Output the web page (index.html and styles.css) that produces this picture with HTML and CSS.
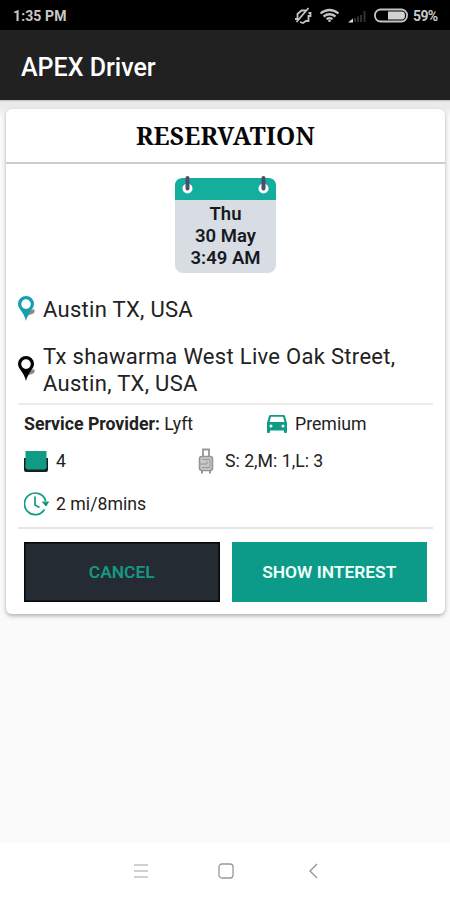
FILE: index.html
```html
<!DOCTYPE html>
<html lang="en">
<head>
<meta charset="utf-8">
<title>APEX Driver</title>
<link rel="stylesheet" href="styles.css">
</head>
<body>
<div class="status">
  <span class="time">1:35 PM</span>
  <svg class="status-icons" width="116" height="20" viewBox="0 0 116 20" fill="none" stroke="#c4c4c4">
    <path d="M4.500 13V9l4-3.500h5M2 14h3.500M7 17l3 1 3-2h2.500v-5h2V8h-2M3.500 17L15.500 3" stroke-width="1.800"/>
    <path d="M27.500 8.500q9-7 18 0M30.500 11.500q6-4.500 12 0M33.500 14.200q3-2 6 0" stroke-width="2.200"/>
    <circle cx="36.500" cy="15.700" r="1.300" fill="#c4c4c4" stroke="none"/>
    <path d="M55 17.500l5-4v4z" fill="#ddd" stroke="none"/>
    <path d="M62 17v-4M65 17v-5.500M68 17v-7M71.500 17V6" stroke="#303030" stroke-width="2"/>
    <rect x="82" y="4.500" width="32" height="12" rx="5.500" stroke-width="1.800"/>
    <path d="M95 6.500h14q3 0 3 4t-3 4H95z" fill="#d0d0d0" stroke="none"/>
  </svg>
  <span class="percent">59%</span>
</div>
<header class="appbar">APEX Driver</header>
<main class="content">
  <section class="card">
    <h1 class="title">RESERVATION</h1>
    <div class="calendar">
      <svg class="calendar-top" width="101" height="24" viewBox="0 0 101 24">
        <path d="M0 24V10q0-8 8-8h85q8 0 8 8v14z" fill="#14ae9e"/>
        <circle cx="12.500" cy="12.500" r="5" fill="#fff"/>
        <circle cx="88.500" cy="12.500" r="5" fill="#fff"/>
        <path d="M12.500 2v10.500M88.500 2v10.500" stroke="#514b67" stroke-width="4" stroke-linecap="round"/>
      </svg>
      <div class="date">Thu<br>30 May<br>3:49 AM</div>
    </div>
    <div class="address from">
      <svg class="pin" width="17" height="26" viewBox="0 0 17 26">
        <path d="M8 22l3-7 5-2q2 4-2 5l-3 1z" fill="#8b8b8b"/>
        <path fill-rule="evenodd" d="M8 0a8 8 0 0 0-8 8c0 5 6 8 8 17 2-9 8-12 8-17a8 8 0 0 0-8-8zm0 3.300a4.800 4.800 0 1 1 0 9.600 4.800 4.800 0 0 1 0-9.600z" fill="#149fac"/>
      </svg>
      <span>Austin TX, USA</span>
    </div>
    <div class="address to">
      <svg class="pin" width="17" height="26" viewBox="0 0 17 26">
        <path d="M8 22l3-7 5-2q2 4-2 5l-3 1z" fill="#8b8b8b"/>
        <path fill-rule="evenodd" d="M8 0a8 8 0 0 0-8 8c0 5 6 8 8 17 2-9 8-12 8-17a8 8 0 0 0-8-8zm0 3.300a4.800 4.800 0 1 1 0 9.600 4.800 4.800 0 0 1 0-9.600z" fill="#050505"/>
      </svg>
      <span>Tx shawarma West Live Oak Street,<br>Austin, TX, USA</span>
    </div>
    <div class="details">
      <div class="row service">
        <span class="provider"><b>Service Provider:</b> Lyft</span>
        <svg class="car" width="20" height="18" viewBox="0 0 20 18">
          <path fill-rule="evenodd" d="M3.500 0h13q1.200 0 1.600 1.200L20 8v9q0 1-1 1h-1q-1 0-1-1v-1.500H3V17q0 1-1 1H1q-1 0-1-1V8l1.900-6.800Q2.300 0 3.500 0zM4 1.800L2.500 7h15L16 1.800zM4 9.500a1.500 1.500 0 1 0 0 3 1.500 1.500 0 0 0 0-3zm12 0a1.500 1.500 0 1 0 0 3 1.500 1.500 0 0 0 0-3z" fill="#109b87"/>
        </svg>
        <span>Premium</span>
      </div>
      <div class="row capacity">
        <svg width="24" height="21" viewBox="0 0 24 21">
          <path d="M0 7h24v12q0 2-2 2H2q-2 0-2-2z" fill="#17221f"/>
          <path d="M1.500 0h21v17l-2 1.500h-17l-2-1.500z" fill="#109b87"/>
        </svg>
        <span class="seats">4</span>
        <svg class="bag" width="16" height="26" viewBox="0 0 16 26" fill="none" stroke="#969696">
          <path d="M5 9V1.500h6V9" stroke-width="1.800"/>
          <rect x="1.500" y="8.500" width="13" height="14" rx="2.500" fill="#c9c9c9" stroke-width="1.600"/>
          <path d="M4 11.500h8M2 16h7v-3M12 12v7M4 19.500h8" stroke-width="1"/>
          <path d="M4 23v2.500M12 23v2.500" stroke-width="2"/>
        </svg>
        <span>S: 2,M: 1,L: 3</span>
      </div>
      <div class="row trip">
        <svg width="26" height="24" viewBox="0 0 26 24" fill="none" stroke="#109b87" stroke-width="1.700">
          <path d="M20.500 17.500A10.800 10.800 0 1 1 21.700 9"/>
          <path d="M11 4.500V13l4.500 2.500"/>
          <path d="M18.500 10h6l-2.500 4z" fill="#109b87" stroke-width="1"/>
        </svg>
        <span>2 mi/8mins</span>
      </div>
    </div>
    <div class="actions">
      <button class="cancel">CANCEL</button>
      <button class="interest">SHOW INTEREST</button>
    </div>
  </section>
</main>
<nav class="nav">
  <svg width="14" height="16" viewBox="0 0 14 16" fill="none" stroke="#a2a2a2" stroke-width="1.200"><path d="M0 2h14M0 8h14M0 14h14"/></svg>
  <svg class="home" width="16" height="16" viewBox="0 0 16 16" fill="none" stroke="#999" stroke-width="1.300"><rect x="1" y="1" width="14" height="14" rx="3"/></svg>
  <svg width="9" height="16" viewBox="0 0 9 16" fill="none" stroke="#929292" stroke-width="1.300"><path d="M8 1L1 8l7 7"/></svg>
</nav>
</body>
</html>
```
FILE: styles.css
```css
* { box-sizing: border-box; }
body {
  margin: 0;
  width: 450px;
  height: 900px;
  display: flex;
  flex-direction: column;
  background: #fafafa;
  color: #222;
  font-family: Roboto, "Liberation Sans", sans-serif;
  overflow: hidden;
}
svg { display: block; flex: none; }
.status {
  height: 30px;
  padding: 2px 12px 0 13px;
  display: flex;
  align-items: center;
  background: #000;
  color: #c8c8c8;
  font-size: 14px;
  font-weight: 700;
}
.time { letter-spacing: .1px; }
.status-icons { margin: -2px 4px 0 auto; }
.percent { width: 25px; letter-spacing: -0.6px; white-space: nowrap; }
.appbar {
  height: 70px;
  padding: 4px 21px 0;
  display: flex;
  align-items: center;
  background: #212121;
  color: #fff;
  font-size: 25px;
  font-weight: 500;
}
.content {
  flex: 1;
  padding: 9px 5px 0 6px;
  background: linear-gradient(#bdbdbd, #e9e9e9 2px, #ececec 9px, #fafafa 18px);
}
.card {
  height: 505px;
  border-radius: 6px;
  background: #fff;
  box-shadow: 0 2px 4px rgba(0, 0, 0, .3);
}
.title {
  height: 55px;
  margin: 0;
  border-bottom: 2px solid #ccc;
  color: #080808;
  text-align: center;
  font: 700 24.5px/53px "Noto Serif", "Liberation Serif", serif;
  letter-spacing: .2px;
}
.calendar {
  width: 101px;
  height: 97px;
  margin: 12px 0 0 169px;
  border-radius: 8px;
  background: linear-gradient(transparent 20px, #d8dce3 20px);
}
.date {
  color: #16191e;
  font-size: 18.5px;
  font-weight: 600;
  line-height: 22px;
  text-align: center;
  padding-top: 3px;
}
.address {
  display: flex;
  align-items: center;
  gap: 8px;
  padding-left: 12px;
  font-size: 22px;
  letter-spacing: .3px;
  line-height: 26.5px;
  white-space: nowrap;
}
.address span { padding-top: 3px; }
.from { height: 26px; margin-top: 23px; }
.to { height: 54px; margin-top: 20px; }
.details {
  height: 126px;
  margin: 7px 12px 0;
  padding: 0 6px;
  border-top: 2px solid #ebebeb;
  border-bottom: 2px solid #e5e5e5;
  font-size: 17.7px;
}
.row { display: flex; align-items: center; white-space: nowrap; }
.service { height: 37px; }
.provider { width: 243px; }
.car { margin-right: 8px; }
.capacity { height: 38px; }
.seats { width: 142px; margin-left: 8px; }
.bag { margin-right: 11px; }
.trip { height: 48px; gap: 6px; }
.actions {
  display: flex;
  gap: 12px;
  padding: 13px 18px 0;
}
.actions button {
  flex: 1 1 0;
  min-width: 0;
  height: 60px;
  padding: 0;
  border: 0;
  font: 600 17.4px Roboto, sans-serif;
  white-space: nowrap;
}
.actions .cancel { box-shadow: inset 0 0 0 1.5px #050708; background: #252b33; color: #149985; }
.actions .interest { background: #0c9b88; color: #effffb; }
.nav {
  height: 58px;
  padding: 0 132px 0 134px;
  display: flex;
  align-items: center;
  justify-content: space-between;
  background: #fff;
}
.home { margin-right: 5px; }
```
